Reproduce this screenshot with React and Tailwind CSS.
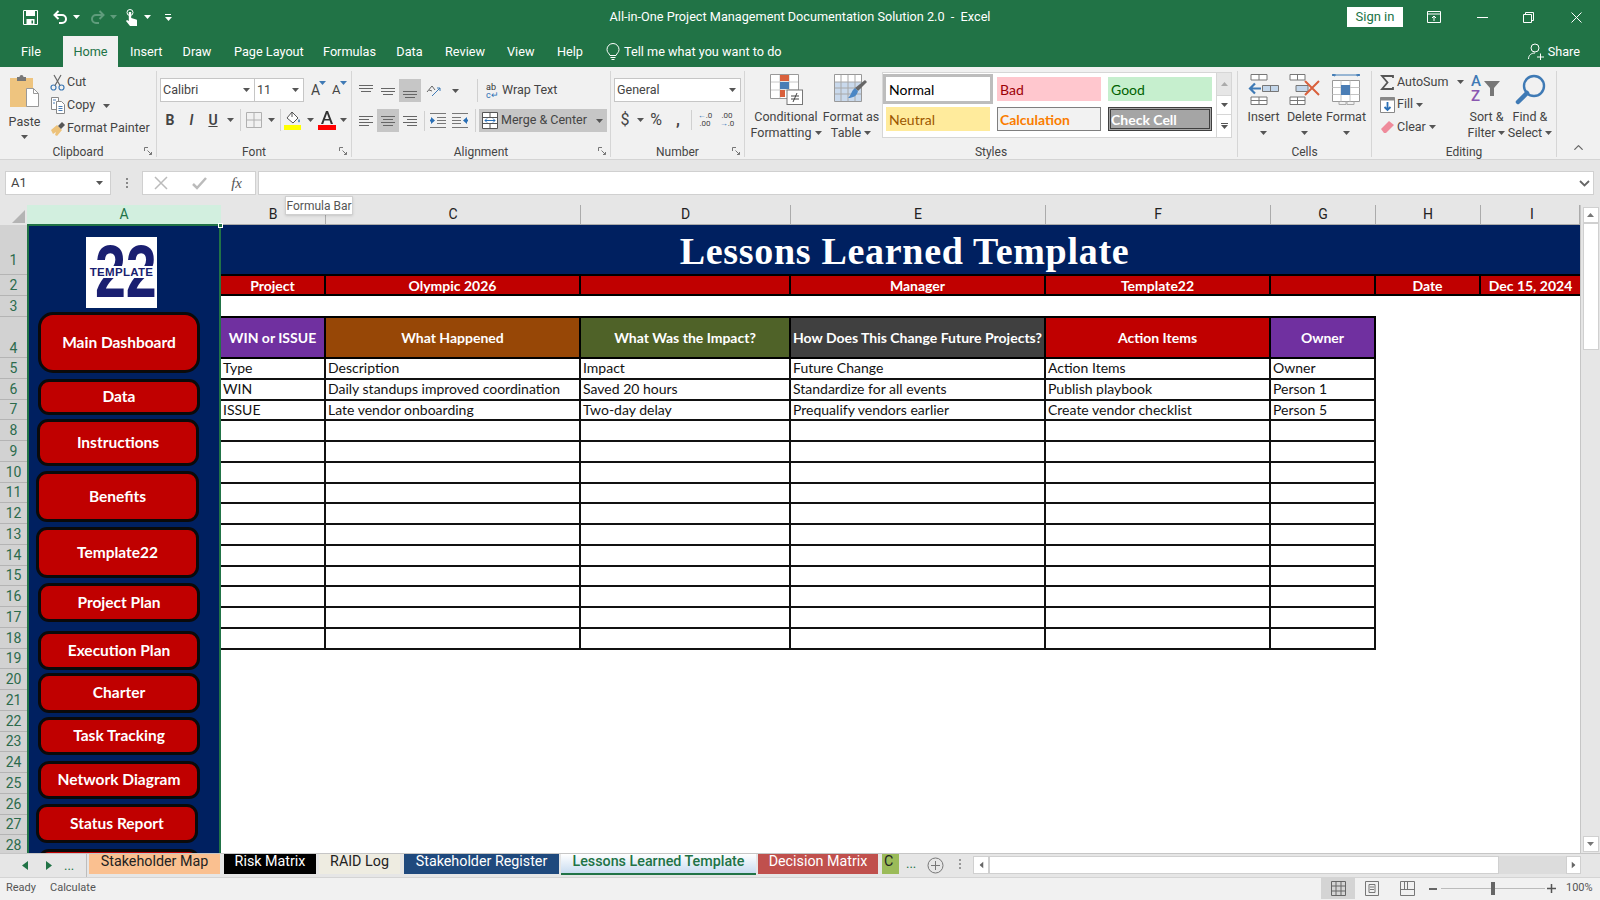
import { ChevronUp } from 'lucide-react';

// --- DATA ---
const ribbonTabs = [
  ['Insert', 'w-[30px]'], ['Draw', 'w-[30px]'], ['Page Layout', 'w-[67px]'], ['Formulas', 'w-[51px]'],
  ['Data', 'w-[27px]'], ['Review', 'w-[40px]'], ['View', 'w-[27px]'], ['Help', 'w-[28px]'],
];

const sideButtons = [
  ['Main Dashboard', 'mt-[4px] ml-[9px] h-[61px] w-[162px] rounded-[15px]'],
  ['Data', 'mt-[6px] ml-[9px] h-[36px] w-[162px]'],
  ['Instructions', 'mt-[4px] ml-[8px] h-[47px] w-[162px]'],
  ['Benefits', 'mt-[5px] ml-[7px] h-[51px] w-[163px]'],
  ['Template22', 'mt-[5px] ml-[7px] h-[51px] w-[163px]'],
  ['Project Plan', 'mt-[5px] ml-[9px] h-[39px] w-[162px]'],
  ['Execution Plan', 'mt-[9px] ml-[9px] h-[39px] w-[162px]'],
  ['Charter', 'mt-[3px] ml-[9px] h-[40px] w-[162px]'],
  ['Task Tracking', 'mt-[4px] ml-[9px] h-[38px] w-[162px]'],
  ['Network Diagram', 'mt-[6px] ml-[9px] h-[38px] w-[162px]'],
  ['Status Report', 'mt-[5px] ml-[7px] h-[39px] w-[162px]'],
  ['', 'mt-[6px] ml-[9px] h-[40px] w-[162px]'],
];

const rowLabels = [
  [1, 'h-[50px] items-end pb-[7px]'], [2, 'h-[21px] items-center'], [3, 'h-[21px] items-center'], [4, 'h-[41px] items-end pb-[2px]'],
  ...Array.from({ length: 24 }, (_, i) => [i + 5, 'h-[20.75px] items-center']),
];

const columns = [
  ['B', 'w-[105px]'], ['C', 'w-[255px]'], ['D', 'w-[210px]'], ['E', 'w-[255px]'],
  ['F', 'w-[225px]'], ['G', 'w-[105px]'], ['H', 'w-[105px]'], ['I', 'w-[99px] pl-[4px]'],
];

const metaRow = [
  ['Project', 'w-[105px]'], ['Olympic 2026', 'w-[255px]'], ['', 'w-[210px]'], ['Manager', 'w-[255px]'],
  ['Template22', 'w-[225px]'], ['', 'w-[105px]'], ['Date', 'w-[105px]'], ['Dec 15, 2024', 'w-[99px]'],
];

const tableHead = [
  ['WIN or ISSUE', 'bg-[#7030a0]'], ['What Happened', 'bg-[#974706]'], ['What Was the Impact?', 'bg-[#4f6228]'],
  ['How Does This Change Future Projects?', 'bg-[#404040]'], ['Action Items', 'bg-[#c00000]'], ['Owner', 'bg-[#7030a0]'],
];

const tableRows = [
  ['Type', 'Description', 'Impact', 'Future Change', 'Action Items', 'Owner'],
  ['WIN', 'Daily standups improved coordination', 'Saved 20 hours', 'Standardize for all events', 'Publish playbook', 'Person 1'],
  ['ISSUE', 'Late vendor onboarding', 'Two-day delay', 'Prequalify vendors earlier', 'Create vendor checklist', 'Person 5'],
  ...Array.from({ length: 11 }, () => ['', '', '', '', '', '']),
];

const sheetTabs = [
  ['Stakeholder Map', 'w-[131px] ml-[2px] bg-[#fac090] text-[#222]'],
  ['Risk Matrix', 'w-[92px] ml-[4px] bg-black text-white'],
  ['RAID Log', 'w-[81px] ml-[3px] bg-[#eeece1] text-[#222]'],
  ['Stakeholder Register', 'w-[155px] ml-[4px] bg-[#1f497d] text-white'],
];

// --- ICONS ---
const Caret = ({ color = '#555' }) => (
  <svg width="7" height="4" viewBox="0 0 7 4"><path d="M0 0h7L3.5 4z" fill={color} /></svg>
);

const Box = ({ w, hl, children }) => (
  <span className={`flex h-full shrink-0 items-center justify-center ${w} ${hl ? 'bg-[#c6c6c6]' : ''}`}>{children}</span>
);

const Sep = () => (
  <span className="flex h-full w-[6px] shrink-0 justify-center py-[1px]"><span className="w-px bg-[#d0d0d0]" /></span>
);

const Lines = ({ rows }) => (
  <svg width="16" height="16" viewBox="0 0 16 16" stroke="#666" strokeWidth="1">
    {rows.map(([y, x1, x2]) => <line key={y} x1={x1} x2={x2} y1={y + 0.5} y2={y + 0.5} />)}
  </svg>
);

const Launcher = () => (
  <svg className="absolute right-[3px] bottom-[1px]" width="9" height="9" viewBox="0 0 9 9" fill="none" stroke="#777">
    <path d="M.5 4V.5H4" /><path d="M3.5 3.5l4 4M7.5 5v2.5H5" />
  </svg>
);

const IconSave = () => (
  <svg width="15" height="15" viewBox="0 0 15 15"><path d="M.5.500h14v14H.5z" fill="none" stroke="#fff" /><path d="M3 1h9v5H3zM3.500 9h8v5h-8z" fill="#fff" /><path d="M8.500 10.500H10v3H8.500z" fill="#217346" /></svg>
);

const IconUndo = ({ color, flip }) => (
  <svg width="15" height="14" viewBox="0 0 15 14" fill="none" stroke={color} strokeWidth="2" className={flip ? '-scale-x-100' : ''}>
    <path d="M5.500 1L1.500 5l4 4" /><path d="M2 5h7a4 4 0 0 1 0 8H6" />
  </svg>
);

const IconTouch = () => (
  <svg width="13" height="17" viewBox="0 0 13 17" fill="#fff"><circle cx="5" cy="3.500" r="3" fill="none" stroke="#fff" /><path d="M3.800 3h2.400v6l5 1.500a1 1 0 0 1 .8 1V17H5l-4-5 1-1 1.800 1z" /></svg>
);

const IconPaste = () => (
  <svg width="32" height="38" viewBox="0 0 32 38">
    <rect x="1" y="5" width="23" height="29" fill="#eec47f" />
    <path d="M8 4h2.500a2 2 0 0 1 4 0H17v4H8z" fill="#777" />
    <path d="M17.500 15.500h7l5 5v13h-12z" fill="#fff" stroke="#999" />
    <path d="M24.500 15.500v5h5" fill="none" stroke="#999" />
  </svg>
);

const IconCut = () => (
  <svg width="15" height="17" viewBox="0 0 15 17" fill="none" stroke="#3f7ab5" strokeWidth="1.200">
    <circle cx="3.500" cy="13.500" r="2.500" /><circle cx="11.500" cy="13.500" r="2.500" />
    <path d="M5 11.500L11 1M10 11.500L4 1" stroke="#666" />
  </svg>
);

const IconCopy = () => (
  <svg width="16" height="17" viewBox="0 0 16 17" fill="#fff" stroke="#888">
    <path d="M1.500.500h7v12h-7z" /><path d="M6.500 4.500h5l3 3v9h-8z" />
    <path d="M3 3h3M3 6h2M8.500 9.500h4M8.500 11.500h4M8.500 13.500h4" stroke="#4a7db5" />
  </svg>
);

const IconPainter = () => (
  <svg width="16" height="16" viewBox="0 0 16 16">
    <path d="M1 9l6-5 5 5-5 6-2-1 1-3-3 2z" fill="#edc27a" />
    <path d="M8 5l4-4 3 3-4 4z" fill="#555" />
  </svg>
);

const IconBorders = () => (
  <svg width="16" height="16" viewBox="0 0 16 16" fill="none" stroke="#b0b0b0"><path d="M.5.500h15v15H.5zM8 .5v15M.5 8h15" /></svg>
);

const IconFill = () => (
  <svg width="18" height="19" viewBox="0 0 18 19">
    <path d="M8 1l6 6-5 5-6-5z" fill="#fff" stroke="#555" /><path d="M8 1v5" stroke="#555" />
    <path d="M15 8s2 2.500 0 3.500c-2-1-0-3.500 0-3.500z" fill="#3f7ab5" />
    <rect y="14" width="17" height="5" fill="#ffff00" />
  </svg>
);

const IconFontColor = () => (
  <svg width="18" height="19" viewBox="0 0 18 19"><path d="M8 0h2l5 13h-2.200l-1.200-3.500H6.400L5.200 13H3zM7 8h4L9 2.500z" fill="#333" /><rect y="14" width="18" height="5" fill="#ff0000" /></svg>
);

const IconOrient = () => (
  <svg width="16" height="16" viewBox="0 0 16 16" fill="none" stroke="#666"><path d="M1 9l5-6 3 4M3 7l3 1" /><path d="M6 13L14 5M11 5h3v3" stroke="#3f7ab5" /></svg>
);

const IconIndent = ({ flip }) => (
  <svg width="16" height="15" viewBox="0 0 16 15" className={flip ? '-scale-x-100' : ''}>
    <path d="M0 .5h16M7 4.500h9M7 7.500h9M7 10.500h9M0 14.500h16" stroke="#777" fill="none" />
    <path d="M5 7.500L1 4v2.500H0v2h1V11z" fill="#2a6fb5" />
  </svg>
);

const IconMerge = () => (
  <svg width="16" height="17" viewBox="0 0 16 17" fill="#fff" stroke="#555">
    <path d="M.5.500h15v16H.5z" /><path d="M.5 5.500h15M.5 11.500h15M8 .5v5M8 11.500v5" />
    <path d="M3 8.500h10M3 8.500l2-2M3 8.500l2 2M13 8.500l-2-2M13 8.500l-2 2" stroke="#2a6fb5" fill="none" />
  </svg>
);

const IconCond = () => (
  <svg width="33" height="31" viewBox="0 0 33 31">
    <path d="M.5.500h28v24H.5z" fill="#fff" stroke="#999" />
    <path d="M10 1v23M19 1v23M1 8h27M1 16h27" stroke="#c8c8c8" />
    <rect x="10" y="1" width="9" height="6" fill="#d9603c" /><rect x="10" y="8" width="9" height="7" fill="#4a7db5" />
    <rect x="10" y="16" width="5" height="7" fill="#d9603c" />
    <rect x="17" y="16" width="15.500" height="14.500" fill="#fff" stroke="#777" />
    <path d="M21 22h8M21 25h8M27 19l-4 9" stroke="#444" fill="none" />
  </svg>
);

const IconFormatTable = () => (
  <svg width="34" height="31" viewBox="0 0 34 31">
    <path d="M.5.500h27v27H.5z" fill="#fff" stroke="#999" />
    <rect x="1" y="8" width="26" height="19" fill="#c9d9ec" />
    <path d="M7 1v26M14 1v26M21 1v26M1 8h26M1 14h26M1 20h26" stroke="#a8a8a8" />
    <path d="M33 8l-9 9-3-3 10-8z" fill="#666" />
    <path d="M21 14l3 3c-1 5-5 7-10 7 3-2 3-7 7-10z" fill="#4a86c5" />
  </svg>
);

const IconInsert = () => (
  <svg width="31" height="31" viewBox="0 0 31 31" fill="#fff" stroke="#777">
    <path d="M3 .5h16v5.500H3zM11 .5v5.500M3 23h16v7.500H3zM3 26.500h16M11 23v7.500" />
    <path d="M14.500 11.500h16v6h-16zM22.500 11.500v6" fill="#c3d6ea" />
    <path d="M13 14.500H2M7 9.500l-5 5 5 5" fill="none" stroke="#3f7ab5" strokeWidth="2.200" />
  </svg>
);

const IconDelete = () => (
  <svg width="31" height="31" viewBox="0 0 31 31" fill="#fff" stroke="#777">
    <path d="M1 .5h15v5.500H1zM8.500 .5v5.500M1 23h15v7.500H1zM1 26.500h15M8.500 23v7.500" />
    <path d="M7 11.500h12v6H7z" fill="#c3d6ea" />
    <path d="M16 7l14 14M30 7L16 21" stroke="#d9603c" strokeWidth="2" fill="none" />
  </svg>
);

const IconFormat = () => (
  <svg width="30" height="31" viewBox="0 0 30 31" fill="none" stroke="#999">
    <path d="M1 1h28M1 1l3-1v2zM29 1l-3-1v2z" stroke="#3f7ab5" />
    <path d="M1.500 6.500h27v21h-27z" fill="#fff" />
    <path d="M10 6.500v21M19 6.500v21M1.500 13.500h27M1.500 20.500h27" stroke="#c4c4c4" />
    <rect x="10" y="11" width="9" height="10" fill="#4a7db5" stroke="none" />
    <path d="M8 27.500v3h7v-3M16 27.500v3h7v-3" stroke="#aaa" />
  </svg>
);

const IconFillDown = () => (
  <svg width="15" height="16" viewBox="0 0 15 16"><path d="M.5.500h14v15H.5z" fill="#fff" stroke="#888" /><path d="M.5.500h14v3H.5z" fill="#888" /><path d="M7.500 5v8M4.500 10l3 3 3-3" stroke="#2a6fb5" strokeWidth="1.800" fill="none" /></svg>
);

const IconEraser = () => (
  <svg width="15" height="14" viewBox="0 0 15 14"><path d="M1 9l8-8 5 4-8 8H4z" fill="#ef8b9b" /></svg>
);

const IconSigma = () => (
  <svg width="14" height="15" viewBox="0 0 14 15" fill="none" stroke="#555" strokeWidth="1.800"><path d="M13 3V1H2l5.500 6.500L2 14h11v-2" /></svg>
);

const IconSort = () => (
  <div className="relative flex h-[31px] w-[31px] flex-col text-[15px] leading-[15px] font-medium">
    <span className="text-[#3f7ab5]">A</span>
    <span className="text-[#8a58b0]">Z</span>
    <svg className="absolute top-[7px] left-[13px]" width="16" height="15" viewBox="0 0 16 15"><path d="M0 0h16L10 7v8H6V7z" fill="#777" /></svg>
  </div>
);

const IconFind = () => (
  <svg width="31" height="31" viewBox="0 0 31 31" fill="none"><circle cx="19" cy="12" r="10" stroke="#3f7ab5" strokeWidth="2.400" /><path d="M12 19L3 28" stroke="#3f7ab5" strokeWidth="4.500" strokeLinecap="round" /></svg>
);

const BigButton = ({ icon, lines, w }) => (
  <div className={`flex flex-col items-center ${w}`}>
    <div className="flex h-[38px] items-start justify-center pt-[3px]">{icon}</div>
    {lines.map((line, i) => (
      <div key={i} className="flex h-[16px] items-center gap-[3px] whitespace-nowrap leading-[16px]">
        {line}{i === lines.length - 1 && <Caret />}
      </div>
    ))}
  </div>
);

// --- TITLE / TABS ---
const TitleBar = () => (
  <div className="grid h-[34px] grid-cols-[1fr_auto_1fr] items-center bg-[#217346] text-white">
    <div className="flex items-center pl-[23px]">
      <IconSave />
      <span className="ml-[15px]"><IconUndo color="#fff" /></span>
      <span className="ml-[5px]"><Caret color="#fff" /></span>
      <span className="ml-[10px]"><IconUndo color="#5f9c7c" flip /></span>
      <span className="ml-[5px]"><Caret color="#5f9c7c" /></span>
      <span className="ml-[8px]"><IconTouch /></span>
      <span className="ml-[6px]"><Caret color="#fff" /></span>
      <span className="ml-[14px] flex flex-col gap-[2px]"><span className="h-px w-[6px] bg-white" /><Caret color="#fff" /></span>
    </div>
    <div className="text-[12.700px]">All-in-One Project Management Documentation Solution 2.0&nbsp; -&nbsp; Excel</div>
    <div className="flex items-center justify-end">
      <button className="flex h-[20px] w-[56px] items-center justify-center bg-white text-[13px] text-[#217346]">Sign in</button>
      <svg className="ml-[24px]" width="14" height="12" viewBox="0 0 14 12" fill="none" stroke="#fff"><path d="M.5.500h13v11H.5zM.5 3h13" /><path d="M7 10V5M5 7l2-2 2 2" /></svg>
      <span className="ml-[36px] h-px w-[11px] bg-white" />
      <svg className="ml-[35px]" width="11" height="11" viewBox="0 0 11 11" fill="none" stroke="#fff"><path d="M.5 2.500h8v8h-8zM2.500 2.500v-2h8v8h-2" /></svg>
      <svg className="mr-[18px] ml-[37px]" width="11" height="11" viewBox="0 0 11 11" stroke="#fff"><path d="M.5.500l10 10M10.500.500l-10 10" /></svg>
    </div>
  </div>
);

const TabBar = () => (
  <div className="flex h-[33px] items-end bg-[#217346] text-[12.700px] text-white">
    <div className="flex h-[31px] w-[63px] items-center pl-[21px]">File</div>
    <div className="flex h-[31px] w-[55px] items-center justify-center bg-[#f1f1f1] text-[#217346]">Home</div>
    <div className="ml-[12px] flex h-[31px] items-center gap-[22px]">
      {ribbonTabs.map(([t, w]) => <span key={t} className={`whitespace-nowrap text-center ${w}`}>{t}</span>)}
    </div>
    <div className="ml-[22px] flex h-[31px] items-center gap-[4px] whitespace-nowrap">
      <svg width="14" height="18" viewBox="0 0 14 18" fill="none" stroke="#fff"><path d="M4 12.500C3 10 1 9.500 1 6.500a6 6 0 0 1 12 0c0 3-2 3.500-3 6zM4.500 14.500h5M5.500 16.500h3" /></svg>
      Tell me what you want to do
    </div>
    <div className="ml-auto flex h-[31px] items-center gap-[4px] pr-[20px]">
      <svg width="16" height="17" viewBox="0 0 16 17" fill="none" stroke="#fff"><circle cx="7" cy="5" r="4" /><path d="M.5 16c0-4 3-6 6.500-6M9 14h7M12.500 10.500v7" /></svg>
      Share
    </div>
  </div>
);

// --- RIBBON ---
const Group = ({ w, label, launcher, children }) => (
  <div className={`relative flex h-full shrink-0 flex-col border-r border-[#d6d6d6] ${w}`}>
    <div className="h-[73px] shrink-0">{children}</div>
    <div className="text-center text-[12px] leading-[16px] text-[#444]">{label}</div>
    {launcher && <Launcher />}
  </div>
);

const Style = ({ cls, children }) => (
  <div className={`flex h-[24px] w-[104px] items-center font-['Lato'] text-[14px] ${cls}`}>{children}</div>
);

const Ribbon = () => (
  <div className="flex h-[93px] items-stretch border-b border-[#d4d4d4] bg-[#f1f1f1] pt-[4px] pb-[2px] text-[12.500px] text-[#444]">
    <Group w="w-[157px]" label="Clipboard" launcher>
      <div className="flex h-full">
        <div className="flex w-[48px] flex-col items-center pt-[2px] pl-[1px]">
          <IconPaste />
          <span className="mt-[3px] leading-[16px]">Paste</span>
          <span className="mt-[5px]"><Caret /></span>
        </div>
        <div className="flex flex-col">
          {[[<IconCut key="c" />, 'Cut', false], [<IconCopy key="c" />, 'Copy', true], [<IconPainter key="c" />, 'Format Painter', false]].map(([ic, t, car]) => (
            <div key={t} className="flex h-[23px] items-center whitespace-nowrap">
              <span className="flex w-[19px] justify-center">{ic}</span>{t}
              {car && <span className="ml-[8px]"><Caret /></span>}
            </div>
          ))}
        </div>
      </div>
    </Group>

    <Group w="w-[195px]" label="Font" launcher>
      <div className="flex h-full flex-col gap-[6px] pt-[7px] pl-[3px]">
        <div className="flex h-[24px] items-center">
          <div className="flex h-full w-[95px] items-center justify-between border border-[#c6c6c6] bg-white pr-[4px] pl-[2px]">Calibri<Caret /></div>
          <div className="flex h-full w-[49px] items-center justify-between border border-l-0 border-[#c6c6c6] bg-white pr-[4px] pl-[2px]">11<Caret /></div>
          <span className="relative ml-[7px] w-[14px] text-[14px]">A<span className="absolute top-[1px] right-[-1px]"><Caret color="#3f7ab5" /></span></span>
          <span className="relative ml-[7px] w-[14px] text-[13px]">A<span className="absolute top-[1px] right-[-1px]"><Caret color="#3f7ab5" /></span></span>
        </div>
        <div className="flex h-[24px] items-center text-[14px]">
          <Box w="w-[20px]"><b>B</b></Box>
          <Box w="w-[23px]"><i className="font-semibold">I</i></Box>
          <Box w="w-[20px]"><u className="font-semibold">U</u></Box>
          <Box w="w-[14px]"><Caret /></Box>
          <Sep />
          <Box w="w-[22px]"><IconBorders /></Box>
          <Box w="w-[12px]"><Caret /></Box>
          <Sep />
          <Box w="w-[20px]"><IconFill /></Box>
          <Box w="w-[14px]"><Caret /></Box>
          <Box w="w-[20px]"><IconFontColor /></Box>
          <Box w="w-[12px]"><Caret /></Box>
        </div>
      </div>
    </Group>

    <Group w="w-[259px]" label="Alignment" launcher>
      <div className="flex h-full flex-col gap-[7px] pt-[8px] pl-[3px]">
        <div className="flex h-[23px] items-center">
          <Box w="w-[22px]"><Lines rows={[[2, 1, 15], [5, 1, 15], [8, 3, 13]]} /></Box>
          <Box w="w-[22px]"><Lines rows={[[5, 1, 15], [8, 1, 15], [11, 3, 13]]} /></Box>
          <Box w="w-[22px]" hl><Lines rows={[[8, 1, 15], [11, 1, 15], [14, 3, 13]]} /></Box>
          <Box w="w-[26px]"><IconOrient /></Box>
          <Box w="w-[16px]"><Caret /></Box>
          <span className="ml-[14px] h-[23px] w-px bg-[#d0d0d0]" />
          <span className="ml-[8px] flex w-[16px] flex-col text-[9px] leading-[8px] text-[#333]">ab<span className="text-[#2a6fb5]">c↵</span></span>
          <span className="whitespace-nowrap">Wrap Text</span>
        </div>
        <div className="flex h-[23px] items-center">
          <Box w="w-[22px]"><Lines rows={[[3, 1, 15], [6, 1, 11], [9, 1, 15], [12, 1, 11]]} /></Box>
          <Box w="w-[22px]" hl><Lines rows={[[3, 1, 15], [6, 3, 13], [9, 1, 15], [12, 3, 13]]} /></Box>
          <Box w="w-[22px]"><Lines rows={[[3, 1, 15], [6, 5, 15], [9, 1, 15], [12, 5, 15]]} /></Box>
          <Box w="w-[6px]"><span className="h-[20px] w-px bg-[#d0d0d0]" /></Box>
          <Box w="w-[22px]"><IconIndent /></Box>
          <Box w="w-[22px]"><IconIndent flip /></Box>
          <span className="ml-[4px] h-[23px] w-px bg-[#d0d0d0]" />
          <div className="ml-[3px] flex h-full w-[128px] items-center bg-[#c6c6c6] pl-[3px]">
            <IconMerge />
            <span className="ml-[3px] whitespace-nowrap">Merge &amp; Center</span>
            <span className="ml-auto mr-[4px]"><Caret /></span>
          </div>
        </div>
      </div>
    </Group>

    <Group w="w-[134px]" label="Number" launcher>
      <div className="flex h-full flex-col gap-[6px] pt-[7px] pl-[3px]">
        <div className="flex h-[24px] w-[127px] items-center justify-between border border-[#c6c6c6] bg-white pr-[4px] pl-[2px]">General<Caret /></div>
        <div className="flex h-[24px] items-center">
          <Box w="w-[22px]"><span className="text-[16px]">$</span></Box>
          <Box w="w-[8px]"><Caret /></Box>
          <Box w="w-[24px]"><span className="text-[16px]">%</span></Box>
          <Box w="w-[20px]"><span className="text-[16px] font-bold">,</span></Box>
          <Box w="w-[6px]"><span className="h-[20px] w-px bg-[#d0d0d0]" /></Box>
          <Box w="w-[22px]"><span className="text-center text-[8px] leading-[8px]"><span className="text-[#2a6fb5]">←</span>.0<br />.00</span></Box>
          <Box w="w-[22px]"><span className="text-center text-[8px] leading-[8px]">.00<br /><span className="text-[#2a6fb5]">→</span>.0</span></Box>
        </div>
      </div>
    </Group>

    <Group w="w-[493px]" label="Styles">
      <div className="flex h-full pl-[6px]">
        <BigButton w="w-[70px]" icon={<IconCond />} lines={['Conditional', 'Formatting']} />
        <BigButton w="w-[60px]" icon={<IconFormatTable />} lines={['Format as', 'Table']} />
        <div className="mt-[1px] ml-[1px] flex h-[66px] w-[350px] border border-[#d6d6d6] bg-white">
          <div className="grid flex-1 grid-cols-[104px_104px_104px] content-start gap-x-[7px] gap-y-[6px] pt-[4px] pl-[3px]">
            <Style cls="outline-3 outline-[#bdbdbd] bg-white pl-[3px] text-black">Normal</Style>
            <Style cls="bg-[#ffc7ce] pl-[3px] text-[#9c0006]">Bad</Style>
            <Style cls="bg-[#c6efce] pl-[3px] text-[#006100]">Good</Style>
            <Style cls="bg-[#ffeb9c] pl-[3px] text-[#9c5700]">Neutral</Style>
            <Style cls="border border-[#7f7f7f] bg-[#f2f2f2] pl-[2px] font-bold text-[#fa7d00]">Calculation</Style>
            <Style cls="border-[3px] border-double border-[#3f3f3f] bg-[#a5a5a5] font-bold text-white">Check Cell</Style>
          </div>
          <div className="flex w-[15px] flex-col border-l border-[#d6d6d6]">
            <span className="flex h-[22px] items-center justify-center bg-[#e6e6e6]"><span className="rotate-180"><Caret color="#aaa" /></span></span>
            <span className="flex h-[20px] items-center justify-center border-y border-[#d6d6d6]"><Caret /></span>
            <span className="flex flex-1 flex-col items-center justify-center gap-[1px]"><span className="h-px w-[7px] bg-[#555]" /><Caret /></span>
          </div>
        </div>
      </div>
    </Group>

    <Group w="w-[134px]" label="Cells">
      <div className="flex h-full pl-[5px]">
        <BigButton w="w-[41px]" icon={<IconInsert />} lines={['Insert', '']} />
        <BigButton w="w-[41px]" icon={<IconDelete />} lines={['Delete', '']} />
        <BigButton w="w-[42px]" icon={<IconFormat />} lines={['Format', '']} />
      </div>
    </Group>

    <Group w="w-[185px]" label="Editing">
      <div className="flex h-full pl-[8px]">
        <div className="flex w-[86px] flex-col">
          <div className="flex h-[22px] items-center whitespace-nowrap"><span className="w-[17px]"><IconSigma /></span>AutoSum<span className="ml-[9px]"><Caret /></span></div>
          <div className="flex h-[23px] items-center"><span className="w-[17px]"><IconFillDown /></span>Fill<span className="ml-[3px]"><Caret /></span></div>
          <div className="flex h-[22px] items-center"><span className="w-[17px]"><IconEraser /></span>Clear<span className="ml-[3px]"><Caret /></span></div>
        </div>
        <BigButton w="w-[41px]" icon={<IconSort />} lines={['Sort &', 'Filter']} />
        <BigButton w="w-[46px]" icon={<IconFind />} lines={['Find &', 'Select']} />
      </div>
    </Group>

    <div className="flex flex-1 items-end justify-center pb-[2px]"><ChevronUp size={15} color="#666" /></div>
  </div>
);

const FormulaBar = () => (
  <div className="relative flex h-[45px] items-start bg-[#e6e6e6] pt-[11px] pl-[5px] text-[13px] text-[#444]">
    <div className="flex h-[24px] w-[106px] items-center justify-between border border-[#d0d0d0] bg-white pr-[7px] pl-[5px]">A1<Caret /></div>
    <div className="flex h-[24px] w-[31px] flex-col items-center justify-center gap-[2px]">
      <span className="h-[2px] w-[2px] bg-[#888]" /><span className="h-[2px] w-[2px] bg-[#888]" /><span className="h-[2px] w-[2px] bg-[#888]" />
    </div>
    <div className="flex h-[24px] w-[114px] items-center justify-between border border-[#d0d0d0] bg-white pr-[13px] pl-[11px]">
      <svg width="14" height="14" viewBox="0 0 14 14" stroke="#bbb" strokeWidth="1.500"><path d="M1 1l12 12M13 1L1 13" /></svg>
      <svg width="15" height="13" viewBox="0 0 15 13" fill="none" stroke="#bbb" strokeWidth="2.500"><path d="M1 7l4 4 9-10" /></svg>
      <span className="font-['Liberation_Serif'] text-[15px] text-[#555] italic">fx</span>
    </div>
    <div className="ml-[2px] flex h-[24px] w-[1336px] items-center justify-end border border-[#d0d0d0] bg-white pr-[3px]">
      <svg width="11" height="7" viewBox="0 0 11 7" fill="none" stroke="#666" strokeWidth="1.800"><path d="M1 1l4.500 4.500L10 1" /></svg>
    </div>
    <div className="absolute top-[36px] left-[285px] z-10 flex h-[19px] w-[68px] items-center justify-center border border-[#d0d0d0] bg-white text-[12px] whitespace-nowrap text-[#555] shadow-sm">Formula Bar</div>
  </div>
);

// --- SHEET ---
const ColumnHeader = () => (
  <div className="flex h-[20px] shrink-0 bg-[#e6e6e6] text-[14px] text-[#222]">
    <div className="flex w-[27px] items-end justify-end pr-[2px] pb-[2px]">
      <svg width="13" height="13" viewBox="0 0 13 13"><path d="M13 0v13H0z" fill="#b4b4b4" /></svg>
    </div>
    <div className="flex w-[194px] items-center justify-center border-b border-[#217346] bg-[#d2efdf] text-[#217346]">A</div>
    {columns.map(([c, w]) => (
      <div key={c} className={`flex items-center justify-center border-r border-b border-[#ababab] ${w}`}>{c}</div>
    ))}
  </div>
);

const RowHeaders = () => (
  <div className="w-[27px] shrink-0 bg-[#d2d2d2] text-[14px] text-[#2c6b4c]">
    {rowLabels.map(([n, cls]) => (
      <div key={n} className={`flex justify-center border-b border-[#b4b4b4] leading-none ${cls}`}>{n}</div>
    ))}
  </div>
);

const Logo = () => (
  <div className="relative mt-[11px] ml-[57px] h-[71px] w-[71px] shrink-0 overflow-hidden bg-white">
    <div className="absolute inset-x-0 top-[3px] scale-x-[0.75] text-center font-['Liberation_Sans'] text-[74px] leading-[64px] font-bold text-[#1a1f71]">22</div>
    <div className="absolute inset-x-0 top-[29px] bg-white text-center font-['Liberation_Sans'] text-[11.500px] leading-[12px] font-bold tracking-[0.300px] text-[#1a1f71]">TEMPLATE</div>
  </div>
);

const Sidebar = () => (
  <div className="relative flex h-full w-[194px] shrink-0 flex-col overflow-hidden border-x-2 border-t border-[#217346] bg-[#002060]">
    <Logo />
    {sideButtons.map(([label, cls]) => (
      <button key={cls} className={`flex shrink-0 items-center justify-center rounded-[11px] border-[3px] border-[#0a0a0a] bg-[#c00000] font-['Lato'] text-[15.500px] font-bold text-white ${cls}`}>{label}</button>
    ))}
  </div>
);

const Grid = () => (
  <div className="flex h-full w-[1359px] shrink-0 flex-col bg-white font-['Lato'] text-[14px]">
    <div className="flex h-[49px] shrink-0 items-center justify-center bg-[#002060] pt-[4px] pl-[8px] font-['Liberation_Serif'] text-[38px] font-bold tracking-[0.700px] text-white">Lessons Learned Template</div>
    <div className="flex h-[22px] shrink-0 border-y-2 border-black bg-[#c00000] font-bold text-white">
      {metaRow.map(([t, w], i) => (
        <div key={i} className={`flex items-center justify-center whitespace-nowrap ${i < 7 ? 'border-r-2 border-black' : ''} ${w}`}>{t}</div>
      ))}
    </div>
    <div className="h-[20px] shrink-0" />
    <div className="grid w-[1155px] shrink-0 grid-cols-[105px_255px_210px_255px_225px_105px]">
      {tableHead.map(([t, bg]) => (
        <div key={t} className={`flex h-[43px] items-center justify-center border-y-2 border-r-2 border-black px-[2px] text-center font-bold whitespace-nowrap text-white ${bg}`}>{t}</div>
      ))}
      {tableRows.map((row, r) => row.map((t, c) => (
        <div key={`${r}-${c}`} className="flex h-[20.750px] items-center border-r-2 border-b-2 border-[#111] pb-[1px] pl-[2px] whitespace-nowrap text-[#111]">{t}</div>
      )))}
    </div>
  </div>
);

const VScroll = () => (
  <div className="flex w-[20px] shrink-0 flex-col items-center border-l border-[#c6c6c6] bg-[#e6e6e6] pt-[2px] pb-[1px]">
    <div className="flex h-[16px] w-[16px] items-center justify-center border border-[#d0d0d0] bg-white"><span className="rotate-180"><Caret color="#777" /></span></div>
    <div className="h-[127px] w-[16px] border border-[#d0d0d0] bg-white" />
    <div className="mt-auto flex h-[16px] w-[16px] items-center justify-center border border-[#d0d0d0] bg-white"><Caret color="#777" /></div>
  </div>
);

const SheetTabs = () => (
  <div className="flex h-[24px] items-start border-t border-[#c6c6c6] bg-[#e6e6e6] text-[14.300px] text-[#222]">
    <div className="flex h-full w-[87px] shrink-0 items-center border-r border-[#bdbdbd] text-[#217346]">
      <svg className="ml-[22px]" width="6" height="9" viewBox="0 0 6 9" fill="#217346"><path d="M6 0v9L0 4.500z" /></svg>
      <svg className="ml-[18px]" width="6" height="9" viewBox="0 0 6 9" fill="#217346"><path d="M0 0v9l6-4.500z" /></svg>
      <span className="ml-[12px] text-[13px] leading-none">...</span>
    </div>
    {sheetTabs.map(([t, cls]) => (
      <div key={t} className={`flex h-[20px] shrink-0 items-start justify-center leading-[15px] whitespace-nowrap ${cls}`}>{t}</div>
    ))}
    <div className="ml-[2px] flex h-[21px] w-[195px] shrink-0 items-start justify-center border-b-2 border-[#217346] bg-gradient-to-b from-white to-[#c9dcf0] leading-[15px] font-medium whitespace-nowrap text-[#217346]">Lessons Learned Template</div>
    <div className="ml-[2px] flex h-[20px] w-[120px] shrink-0 items-start justify-center bg-[#c0504d] leading-[15px] whitespace-nowrap text-white">Decision Matrix</div>
    <div className="ml-[4px] h-[20px] w-[17px] shrink-0 overflow-hidden bg-[#9bbb59] pl-[2px] leading-[15px]">C</div>
    <span className="ml-[7px] text-[13px] leading-[20px] text-[#217346]">...</span>
    <svg className="mt-[3px] ml-[11px]" width="17" height="17" viewBox="0 0 17 17" fill="none" stroke="#777"><circle cx="8.500" cy="8.500" r="7.500" /><path d="M8.500 4v9M4 8.500h9" /></svg>
    <span className="mt-[5px] ml-[15px] flex flex-col gap-[2px]"><span className="h-[2px] w-[2px] bg-[#999]" /><span className="h-[2px] w-[2px] bg-[#999]" /><span className="h-[2px] w-[2px] bg-[#999]" /></span>
    <div className="mt-[2px] ml-[12px] flex h-[18px] w-[608px] items-stretch">
      <span className="flex w-[16px] items-center justify-center border border-[#d0d0d0] bg-white"><span className="rotate-90"><Caret color="#666" /></span></span>
      <span className="w-[510px] border border-[#d0d0d0] bg-white" />
      <span className="flex-1 bg-[#dcdcdc]" />
      <span className="flex w-[15px] items-center justify-center border border-[#d0d0d0] bg-white"><span className="-rotate-90"><Caret color="#666" /></span></span>
    </div>
  </div>
);

const StatusBar = () => (
  <div className="flex h-[23px] items-center border-t border-[#d4d4d4] bg-[#f1f1f1] pb-[1px] pl-[6px] text-[11px] text-[#555]">
    <span>Ready</span>
    <span className="ml-[14px]">Calculate</span>
    <div className="ml-auto flex h-full items-center">
      <span className="flex h-full w-[34px] items-center justify-center bg-[#d4d4d4]">
        <svg width="15" height="15" viewBox="0 0 15 15" fill="none" stroke="#666"><path d="M.5.500h14v14H.5zM5 .5v14M10 .5v14M.5 5h14M.5 10h14" /></svg>
      </span>
      <svg className="ml-[10px]" width="14" height="15" viewBox="0 0 14 15" fill="none" stroke="#777"><path d="M.5.500h13v14H.5zM4 3.500h6v8H4zM5 6h4M5 8.500h4" /></svg>
      <svg className="ml-[21px]" width="15" height="15" viewBox="0 0 15 15" fill="none" stroke="#777"><path d="M.5.500h14v14H.5zM7.500.5v8M.5 8.500h14M4.500.5v8" /></svg>
      <span className="ml-[14px] h-[2px] w-[8px] bg-[#666]" />
      <span className="relative ml-[4px] h-px w-[104px] bg-[#bbb]">
        <span className="absolute top-[-6px] left-[50px] h-[13px] w-[4px] bg-[#666]" />
      </span>
      <svg className="ml-[2px]" width="9" height="9" viewBox="0 0 9 9" stroke="#555" strokeWidth="1.500"><path d="M4.500 0v9M0 4.500h9" /></svg>
      <span className="mr-[7px] ml-[10px] w-[27px] whitespace-nowrap">100%</span>
    </div>
  </div>
);

export default function App() {
  return (
    <div className="flex h-[900px] w-[1600px] flex-col overflow-hidden bg-white font-['Roboto',sans-serif]">
      <TitleBar />
      <TabBar />
      <Ribbon />
      <FormulaBar />
      <div className="flex h-[648px] shrink-0">
        <div className="relative flex min-w-0 flex-1 flex-col">
          <ColumnHeader />
          <div className="flex min-h-0 flex-1 overflow-hidden">
            <RowHeaders />
            <Sidebar />
            <Grid />
          </div>
          {/* fill handle of the selected cell */}
          <span className="absolute top-[18px] left-[218px] h-[5px] w-[5px] border border-white bg-[#217346]" />
        </div>
        <VScroll />
      </div>
      <SheetTabs />
      <StatusBar />
    </div>
  );
}
